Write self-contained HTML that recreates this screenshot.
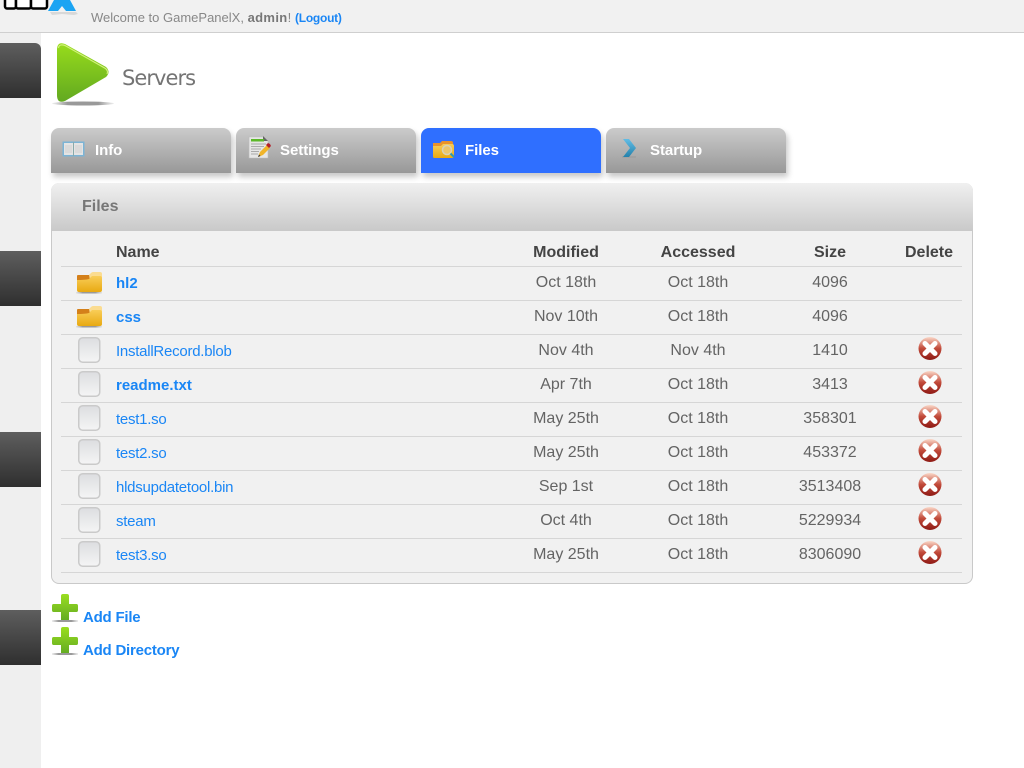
<!DOCTYPE html>
<html>
<head>
<meta charset="utf-8">
<title>Servers</title>
<style>
html,body{margin:0;padding:0;width:1024px;height:768px;overflow:hidden;background:#fff;font-family:"Liberation Sans",Arial,sans-serif}
.a{position:absolute}
#top{left:0;top:0;width:1024px;height:32px;background:#f1f1f1;border-bottom:1px solid #cfcfcf}
#side{left:0;top:33px;width:41px;height:735px;background:#efefef}
.blk{left:0;width:41px;height:55px;background:linear-gradient(#5e5e5e,#2f2f2f)}
#wel{left:91px;top:11px;font-size:13px;line-height:14px;color:#888;white-space:nowrap}
#wel b{color:#777;letter-spacing:.35px}
#log{left:295px;top:11px;font-size:12px;line-height:14px;color:#1a86f5;font-weight:bold;letter-spacing:-.25px;white-space:nowrap}
#title{left:122px;top:66px;font-size:21px;line-height:24px;color:#747474;font-family:"DejaVu Sans","Liberation Sans",sans-serif;letter-spacing:-.95px}
.tab{top:128px;width:180px;height:45px;border-radius:8px 8px 0 0;background:linear-gradient(#cbcbcb,#989898);box-shadow:2px 4px 6px rgba(0,0,0,.22)}
.tab.on{background:#2f6fff}
.tl{top:142px;font-size:15px;line-height:18px;font-weight:bold;color:#fff;white-space:nowrap;letter-spacing:-.05px}
#panel{left:51px;top:183px;width:920px;height:400px;border:1px solid #c9c9c9;border-top:0;border-radius:8px;background:#f1f1f1}
#phead{left:51px;top:183px;width:922px;height:48px;border-radius:8px 8px 0 0;background:linear-gradient(#f0f0f0,#c9c9c9)}
#ptitle{left:82px;top:198px;font-size:16px;line-height:18px;font-weight:bold;color:#777;white-space:nowrap}
.th{top:244px;font-size:16px;line-height:18px;font-weight:bold;color:#444;white-space:nowrap}
.c{transform:translateX(-50%)}
.ln{left:61px;width:901px;height:1px;background:#d6d6d6}
.n{left:116px;margin-top:1px;font-size:15px;line-height:18px;color:#1a86f5;white-space:nowrap;letter-spacing:-.25px}
.n.b{font-weight:bold;letter-spacing:0}
.d{font-size:16px;line-height:18px;color:#646464;white-space:nowrap}
.add{left:83px;margin-top:1px;font-size:15px;line-height:18px;font-weight:bold;color:#1a86f5;white-space:nowrap;letter-spacing:-.22px}
svg{position:absolute;overflow:visible}
</style>
</head>
<body>
<svg width="0" height="0" style="position:absolute">
<defs>
<linearGradient id="fg" x1="0" y1="0" x2="0" y2="1"><stop offset="0" stop-color="#f9cd58"/><stop offset="1" stop-color="#e8a912"/></linearGradient>
<linearGradient id="bg" x1="0" y1="0" x2="0" y2="1"><stop offset="0" stop-color="#dcdde0"/><stop offset="1" stop-color="#f5f5f5"/></linearGradient>
<linearGradient id="rg" x1="0" y1="0" x2="0" y2="1"><stop offset="0" stop-color="#fbd8c8"/><stop offset=".5" stop-color="#c24a3a"/><stop offset="1" stop-color="#8e1a14"/></linearGradient>
<linearGradient id="pg" x1="0" y1="0" x2="0" y2="1"><stop offset="0" stop-color="#98dc1c"/><stop offset="1" stop-color="#62a920"/></linearGradient>
<linearGradient id="tg" x1="0" y1="0" x2="0" y2="1"><stop offset="0" stop-color="#9ade20"/><stop offset="1" stop-color="#64ac22"/></linearGradient>
<linearGradient id="ch" x1="0" y1="0" x2="0" y2="1"><stop offset="0" stop-color="#62bde6"/><stop offset="1" stop-color="#2481ab"/></linearGradient>
<linearGradient id="ps" x1="0" y1="0" x2="1" y2="0"><stop offset="0" stop-color="#aaa" stop-opacity=".2"/><stop offset=".25" stop-color="#999"/><stop offset=".75" stop-color="#999"/><stop offset="1" stop-color="#aaa" stop-opacity=".2"/></linearGradient>
<g id="folder">
<rect x="0" y="20" width="26" height="1.500" fill="url(#ps)"/>
<path d="M1 4q0-1 1-1h12l2 4v3H1z" fill="#d4801a"/>
<path d="M13 3l2-2q1-1 2-1h7q2 0 2 2v6H14z" fill="#fbdc90"/>
<path d="M1 8q8 0 12-1l3-3h8q2 0 2 2v12q0 2-2 2H3q-2 0-2-2z" fill="url(#fg)"/>
</g>
<g id="file">
<rect x=".75" y=".75" width="21" height="24.500" rx="4" fill="url(#bg)" stroke="#cacaca" stroke-width="1.500"/>
</g>
<g id="del">
<circle cx="12" cy="11.500" r="11.500" fill="url(#rg)"/>
<path d="M7 6.500L17 16.500M17 6.500L7 16.500" stroke="#fff" stroke-width="5" stroke-linecap="round"/>
</g>
<g id="plus">
<rect x="0" y="26" width="26" height="2" fill="url(#ps)"/>
<path d="M9 2q0-2 2-2h4q2 0 2 2v8h7.500q1.500 0 1.500 2v4q0 2-1.500 2H17v8H9v-8H1.500q-1.500 0-1.500-2v-4q0-2 1.500-2H9z" fill="url(#tg)"/>
</g>
</defs>
</svg>

<div class="a" id="top"></div>
<div class="a" id="side"></div>
<div class="a blk" style="top:43px;border-radius:0 6px 0 0"></div>
<div class="a blk" style="top:251px"></div>
<div class="a blk" style="top:432px"></div>
<div class="a blk" style="top:610px"></div>

<!-- logo fragment -->
<svg style="left:0;top:0" width="90" height="20">
<path d="M50 12h26l2 2-4 1-12-1-10 1z" fill="#bbb" opacity=".45"/>
<rect x="5" y="-4" width="11" height="12.500" rx="2" fill="#fff" stroke="#000" stroke-width="2.500"/>
<rect x="16" y="-4" width="15" height="12.500" rx="2" fill="#fff" stroke="#000" stroke-width="2.500"/>
<rect x="31" y="-4" width="16" height="12.500" rx="2" fill="#fff" stroke="#000" stroke-width="2.500"/>
<path d="M54 0H70L76 11H66L62 6 58 11H48Z" fill="#1ba4f3"/>
</svg>

<div class="a" id="wel">Welcome to GamePanelX, <b>admin</b>!</div>
<div class="a" id="log">(Logout)</div>

<!-- play icon -->
<svg style="left:52px;top:42px" width="64" height="66">
<ellipse cx="31" cy="61.500" rx="31" ry="2" fill="url(#ps)"/>
<path d="M5 8Q5-1 13 2L54 25Q59 30 54 35L13 59Q5 62 5 53Z" fill="url(#pg)"/>
<path d="M6.500 6Q7 1.500 13 3.500L53.500 26.500Q56.500 29 55 32" fill="none" stroke="#d0f07a" stroke-width="1.200"/>
</svg>
<div class="a" id="title">Servers</div>

<!-- tabs -->
<div class="a tab" style="left:51px"></div>
<div class="a tab" style="left:236px"></div>
<div class="a tab on" style="left:421px"></div>
<div class="a tab" style="left:606px"></div>

<svg style="left:62px;top:141px" width="24" height="16">
<rect x=".5" y=".5" width="22" height="15" fill="#7bb4d6"/>
<rect x="2" y="2" width="9" height="12" fill="#e4e4e4"/>
<rect x="12" y="2" width="9" height="12" fill="#e4e4e4"/>
<path d="M3 5h7M3 7h7M3 9h7M3 11h7M13 5h7M13 7h7M13 9h7M13 11h7" stroke="#cfcfcf" stroke-width="1"/>
<rect x="11" y="1" width="1" height="14" fill="#8aa"/>
</svg>
<svg style="left:249px;top:136px" width="22" height="24">
<path d="M0 1h14l5 4v17H0z" fill="#e6e6e6" stroke="#bbb" stroke-width=".6"/>
<path d="M14 0l5 5h-5z" fill="#666"/>
<rect x="2" y="3" width="13" height="2.500" fill="#5cb82a"/>
<path d="M2 8h15M2 10.500h13M2 13h10M2 15.500h8M2 18h7" stroke="#aaa" stroke-width="1"/>
<path d="M9 21l2-5 7-7 3 3-7 7z" fill="#f0b429"/>
<path d="M17 9l2-2 2 1 1 2-2 2z" fill="#b3202a"/>
<path d="M9 21l1-2.500 1.500 1.500z" fill="#333"/>
</svg>
<svg style="left:432px;top:140px" width="24" height="19">
<path d="M1 3h7l2-2h9q2 0 2 2v13H1z" fill="#e9922a"/>
<path d="M1 6h8l2-2h9q2 0 2 2v10q0 2-2 2H2q-1 0-1-2z" fill="url(#fg)"/>
<circle cx="15" cy="10" r="4.500" fill="#ecc66a" stroke="#d8d2b8" stroke-width="1.500"/>
<path d="M18.500 13.500l3.500 3.500" stroke="#2a9ab8" stroke-width="2"/>
</svg>
<svg style="left:622px;top:138px" width="16" height="22">
<rect x="0" y="18" width="14" height="2" fill="#999" opacity=".5"/>
<path d="M1 1h6l7 9-7 9H1l7-9z" fill="url(#ch)"/>
</svg>

<div class="a tl" style="left:95px">Info</div>
<div class="a tl" style="left:280px">Settings</div>
<div class="a tl" style="left:465px">Files</div>
<div class="a tl" style="left:650px">Startup</div>

<!-- panel -->
<div class="a" id="panel"></div>
<div class="a" id="phead"></div>
<div class="a" id="ptitle">Files</div>

<div class="a th" style="left:116px">Name</div>
<div class="a th c" style="left:566px">Modified</div>
<div class="a th c" style="left:698px">Accessed</div>
<div class="a th c" style="left:830px">Size</div>
<div class="a th c" style="left:929px">Delete</div>

<div class="a ln" style="top:266px"></div>
<div class="a ln" style="top:300px"></div>
<div class="a ln" style="top:334px"></div>
<div class="a ln" style="top:368px"></div>
<div class="a ln" style="top:402px"></div>
<div class="a ln" style="top:436px"></div>
<div class="a ln" style="top:470px"></div>
<div class="a ln" style="top:504px"></div>
<div class="a ln" style="top:538px"></div>
<div class="a ln" style="top:572px"></div>

<svg style="left:76px;top:272px" width="26" height="22"><use href="#folder"/></svg>
<svg style="left:76px;top:306px" width="26" height="22"><use href="#folder"/></svg>
<svg style="left:78px;top:337px" width="23" height="26"><use href="#file"/></svg>
<svg style="left:78px;top:371px" width="23" height="26"><use href="#file"/></svg>
<svg style="left:78px;top:405px" width="23" height="26"><use href="#file"/></svg>
<svg style="left:78px;top:439px" width="23" height="26"><use href="#file"/></svg>
<svg style="left:78px;top:473px" width="23" height="26"><use href="#file"/></svg>
<svg style="left:78px;top:507px" width="23" height="26"><use href="#file"/></svg>
<svg style="left:78px;top:541px" width="23" height="26"><use href="#file"/></svg>

<div class="a n b" style="top:274px">hl2</div>
<div class="a n b" style="top:308px">css</div>
<div class="a n" style="top:342px">InstallRecord.blob</div>
<div class="a n b" style="top:376px">readme.txt</div>
<div class="a n" style="top:410px">test1.so</div>
<div class="a n" style="top:444px">test2.so</div>
<div class="a n" style="top:478px">hldsupdatetool.bin</div>
<div class="a n" style="top:512px">steam</div>
<div class="a n" style="top:546px">test3.so</div>

<div class="a d c" style="left:566px;top:274px">Oct 18th</div>
<div class="a d c" style="left:698px;top:274px">Oct 18th</div>
<div class="a d c" style="left:830px;top:274px">4096</div>
<div class="a d c" style="left:566px;top:308px">Nov 10th</div>
<div class="a d c" style="left:698px;top:308px">Oct 18th</div>
<div class="a d c" style="left:830px;top:308px">4096</div>
<div class="a d c" style="left:566px;top:342px">Nov 4th</div>
<div class="a d c" style="left:698px;top:342px">Nov 4th</div>
<div class="a d c" style="left:830px;top:342px">1410</div>
<div class="a d c" style="left:566px;top:376px">Apr 7th</div>
<div class="a d c" style="left:698px;top:376px">Oct 18th</div>
<div class="a d c" style="left:830px;top:376px">3413</div>
<div class="a d c" style="left:566px;top:410px">May 25th</div>
<div class="a d c" style="left:698px;top:410px">Oct 18th</div>
<div class="a d c" style="left:830px;top:410px">358301</div>
<div class="a d c" style="left:566px;top:444px">May 25th</div>
<div class="a d c" style="left:698px;top:444px">Oct 18th</div>
<div class="a d c" style="left:830px;top:444px">453372</div>
<div class="a d c" style="left:566px;top:478px">Sep 1st</div>
<div class="a d c" style="left:698px;top:478px">Oct 18th</div>
<div class="a d c" style="left:830px;top:478px">3513408</div>
<div class="a d c" style="left:566px;top:512px">Oct 4th</div>
<div class="a d c" style="left:698px;top:512px">Oct 18th</div>
<div class="a d c" style="left:830px;top:512px">5229934</div>
<div class="a d c" style="left:566px;top:546px">May 25th</div>
<div class="a d c" style="left:698px;top:546px">Oct 18th</div>
<div class="a d c" style="left:830px;top:546px">8306090</div>

<svg style="left:918px;top:337px" width="24" height="24"><use href="#del"/></svg>
<svg style="left:918px;top:371px" width="24" height="24"><use href="#del"/></svg>
<svg style="left:918px;top:405px" width="24" height="24"><use href="#del"/></svg>
<svg style="left:918px;top:439px" width="24" height="24"><use href="#del"/></svg>
<svg style="left:918px;top:473px" width="24" height="24"><use href="#del"/></svg>
<svg style="left:918px;top:507px" width="24" height="24"><use href="#del"/></svg>
<svg style="left:918px;top:541px" width="24" height="24"><use href="#del"/></svg>

<svg style="left:52px;top:594px" width="26" height="28"><use href="#plus"/></svg>
<svg style="left:52px;top:627px" width="26" height="28"><use href="#plus"/></svg>
<div class="a add" style="top:608px">Add File</div>
<div class="a add" style="top:641px">Add Directory</div>
</body>
</html>
